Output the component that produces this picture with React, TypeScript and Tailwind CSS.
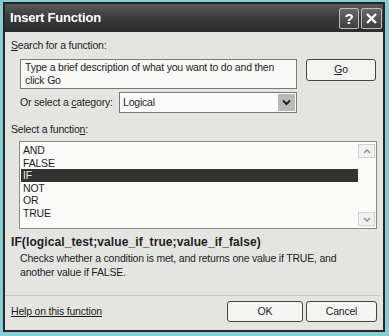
import React from 'react';

const functions = ['AND', 'FALSE', 'IF', 'NOT', 'OR', 'TRUE'];

const App = () => {
    const selected = 'IF';

    return (
        <div className="w-[389px] h-[336px] bg-[#86cdd6] pt-[2px] pl-[3px] pr-[4px] pb-[4px] font-['Liberation_Sans',Arial,sans-serif] text-[#1e1e1e]">
            <div className="h-full flex flex-col border-2 border-[#262626] bg-[#e4e4e1]">
                {/* Title bar */}
                <div className="h-[28px] flex items-center justify-between pl-[5px] pr-[1px] bg-gradient-to-b from-[#5a5a5a] via-[#3a3a3a] to-[#2c2c2c]">
                    <div className="text-white font-bold text-[13px] tracking-[-0.2px]">Insert Function</div>
                    <div className="flex gap-[2px]">
                        <div className="w-[20px] h-[21px] border border-[#bdbdbd] rounded-[2px] bg-gradient-to-b from-[#6a6a6a] to-[#3e3e3e] flex items-center justify-center text-white font-bold text-[15px] leading-none">?</div>
                        <div className="w-[21px] h-[21px] border border-[#bdbdbd] rounded-[2px] bg-gradient-to-b from-[#6a6a6a] to-[#3e3e3e] flex items-center justify-center">
                            <svg width="13" height="13" viewBox="0 0 13 13">
                                <path d="M2 2 L11 11 M11 2 L2 11" stroke="#fff" strokeWidth="2.4" />
                            </svg>
                        </div>
                    </div>
                </div>

                {/* Body */}
                <div className="flex flex-col pl-[6px] pr-[6px] text-[10.5px] tracking-[-0.2px] whitespace-nowrap">
                    <div className="mt-[6px] h-[14px] leading-[14px]"><span className="underline">S</span>earch for a function:</div>

                    <div className="mt-[7px] flex items-start">
                        <div className="ml-[9px] w-[277px] h-[30px] border border-[#7a7a7a] bg-[#f8f8f7] px-[4px] pt-[1px] leading-[13px]">
                            Type a brief description of what you want to do and then<br />click Go
                        </div>
                        <div className="ml-[9px] w-[70px] h-[22px] border border-[#444] rounded-[3px] bg-[#f4f4f2] flex items-center justify-center">
                            <span className="underline">G</span>o
                        </div>
                    </div>

                    <div className="mt-[3px] ml-[9px] flex items-center">
                        <div className="w-[99px]">Or select a <span className="underline">c</span>ategory:</div>
                        <div className="w-[178px] h-[21px] border border-[#7a7a7a] bg-[#fafafa] flex items-center justify-between pl-[3px] pr-[1px]">
                            <span>Logical</span>
                            <div className="w-[17px] h-[17px] bg-[#b9b9b7] flex items-center justify-center">
                                <svg width="9" height="7" viewBox="0 0 9 7">
                                    <path d="M1 1.5 L4.5 5 L8 1.5" stroke="#222" strokeWidth="2" fill="none" />
                                </svg>
                            </div>
                        </div>
                    </div>

                    <div className="mt-[9px] h-[14px] leading-[14px]">Select a functio<span className="underline">n</span>:</div>

                    {/* Function list */}
                    <div className="mt-[5px] ml-[8px] w-[358px] h-[88px] border border-[#8a8a8a] bg-[#fbfbfa] flex">
                        <div className="flex-1 pt-[2px] pl-[1px]">
                            {functions.map((fn) => (
                                <div
                                    key={fn}
                                    className={fn === selected
                                        ? 'h-[12.5px] leading-[12.5px] pl-[2px] bg-[#333330] text-[#e8e8e8]'
                                        : 'h-[12.5px] leading-[12.5px] pl-[2px]'}
                                >
                                    {fn}
                                </div>
                            ))}
                        </div>
                        <div className="w-[18px] flex flex-col justify-between py-[2px] pr-[1px]">
                            <div className="h-[14px] border border-[#d0d0d0] bg-[#f1f1f0] flex items-center justify-center">
                                <svg width="8" height="5" viewBox="0 0 8 5">
                                    <path d="M1 4 L4 1 L7 4" stroke="#8a8a8a" strokeWidth="1.4" fill="none" />
                                </svg>
                            </div>
                            <div className="h-[14px] border border-[#d0d0d0] bg-[#f1f1f0] flex items-center justify-center">
                                <svg width="8" height="5" viewBox="0 0 8 5">
                                    <path d="M1 1 L4 4 L7 1" stroke="#8a8a8a" strokeWidth="1.4" fill="none" />
                                </svg>
                            </div>
                        </div>
                    </div>

                    <div className="mt-[6px] h-[14px] leading-[14px] font-bold text-[12px] tracking-[0.1px]">IF(logical_test;value_if_true;value_if_false)</div>
                    <div className="mt-[2px] ml-[9px] leading-[14px]">
                        Checks whether a condition is met, and returns one value if TRUE, and<br />
                        another value if FALSE.
                    </div>

                    <div className="mt-[16px] -ml-[6px] -mr-[3px] h-px bg-[#c9c9c6]" />

                    <div className="mt-[5px] h-[21px] flex items-center justify-between">
                        <div className="underline">Help on this function</div>
                        <div className="flex gap-[3px]">
                            <div className="w-[76px] h-[21px] border border-[#444] rounded-[3px] bg-[#f4f4f2] flex items-center justify-center">OK</div>
                            <div className="w-[71px] h-[21px] border border-[#444] rounded-[3px] bg-[#f4f4f2] flex items-center justify-center">Cancel</div>
                        </div>
                    </div>
                </div>
            </div>
        </div>
    );
};

export default App;
